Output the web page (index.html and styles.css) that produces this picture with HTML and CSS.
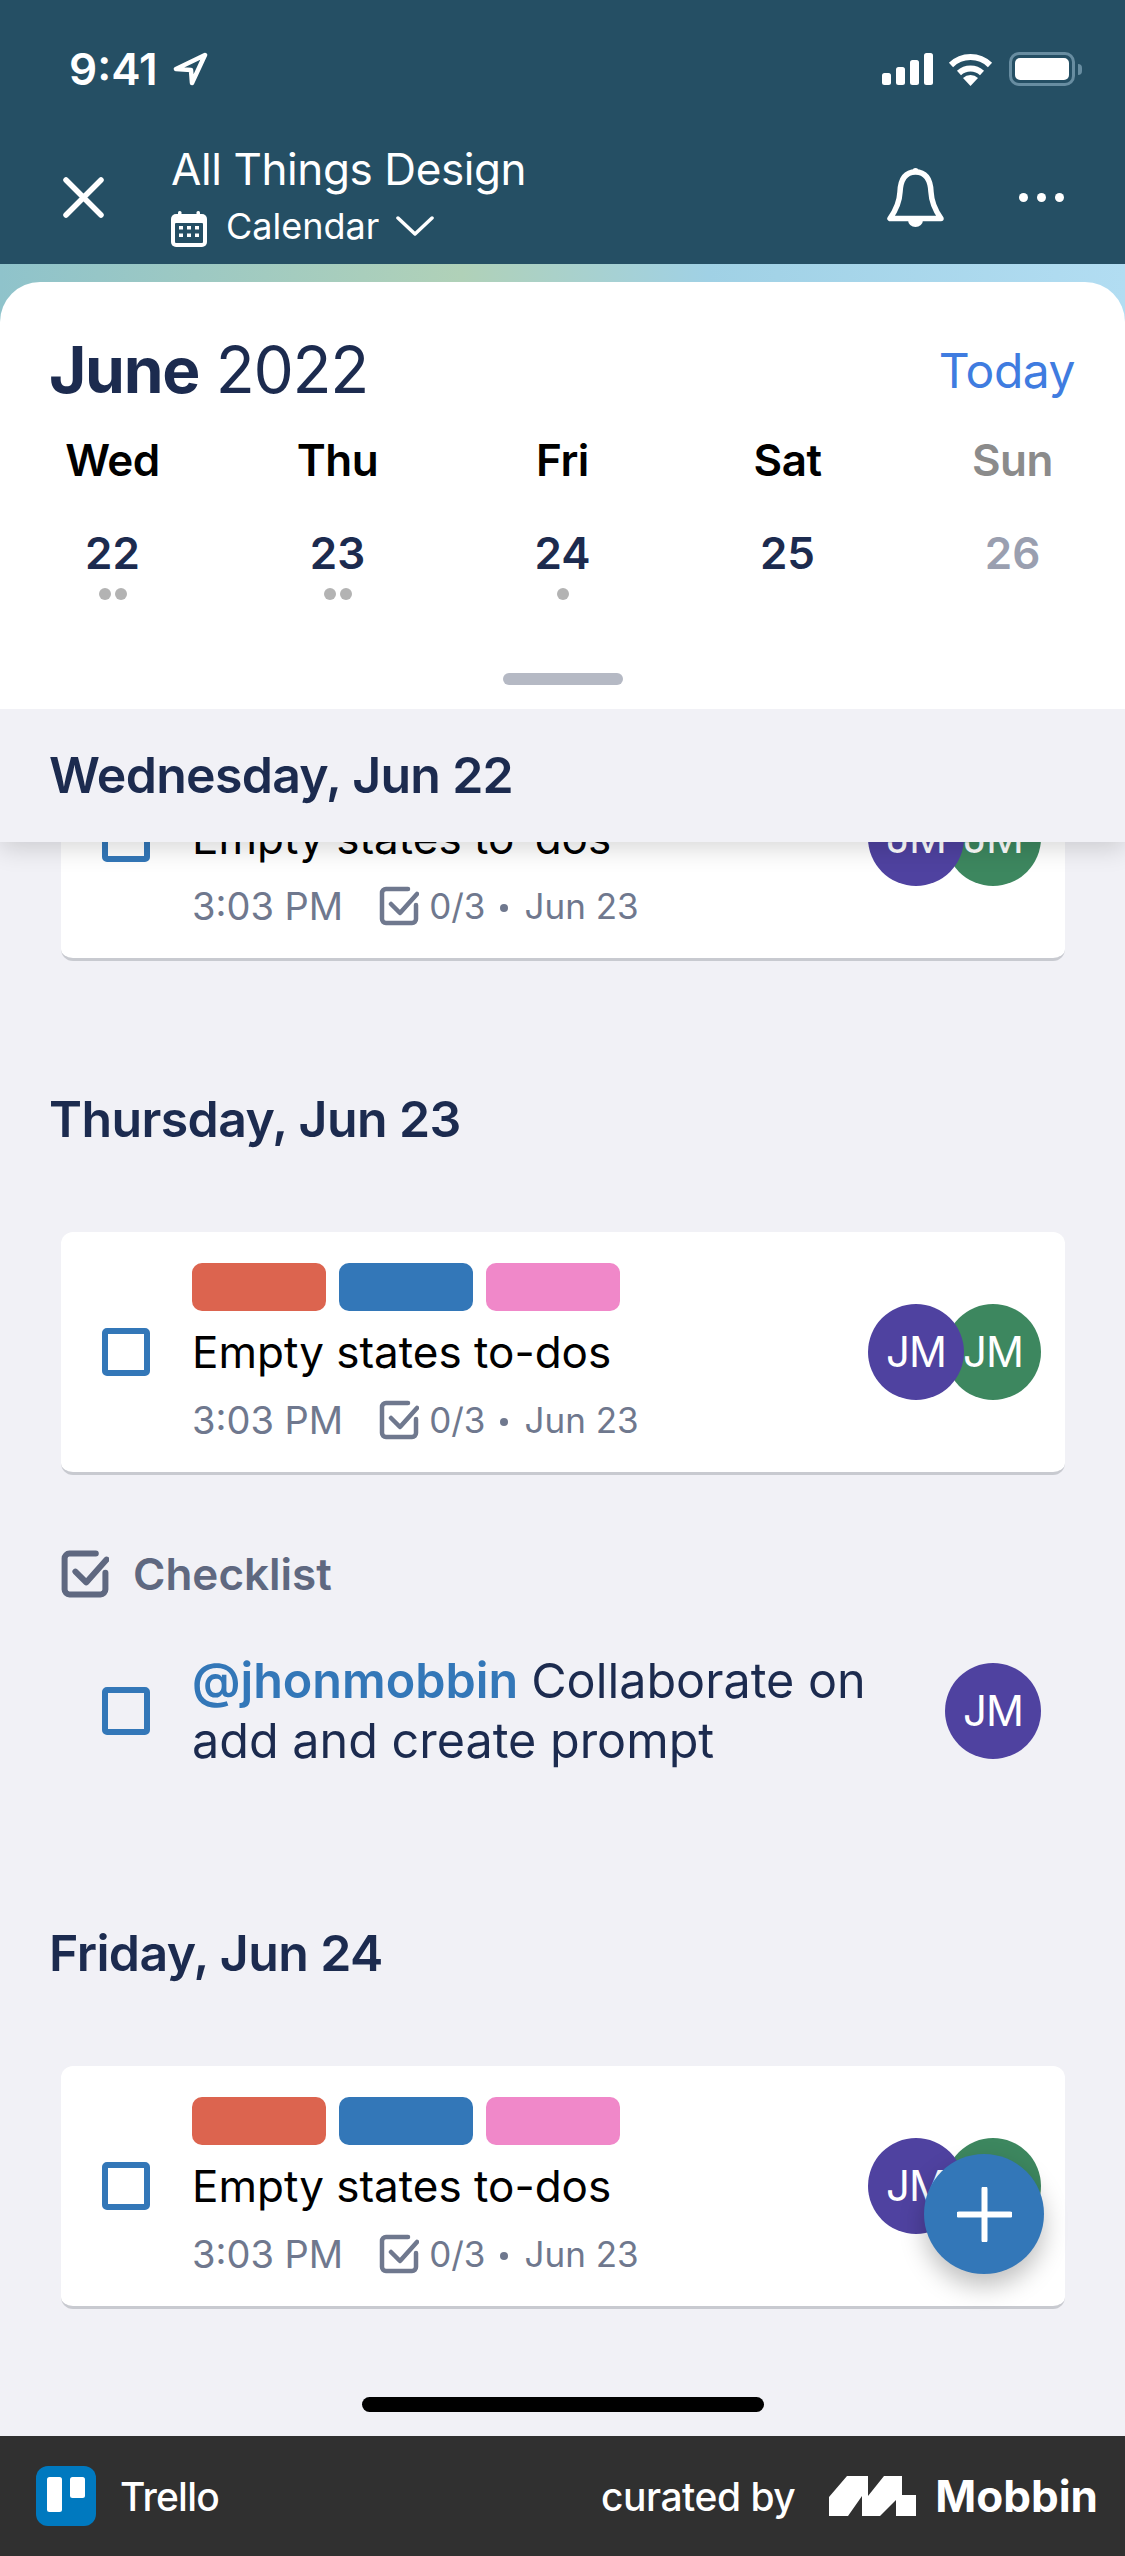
FILE: index.html
```html
<!DOCTYPE html>
<html lang="en">
<head>
  <meta charset="UTF-8" />
  <meta name="viewport" content="width=device-width, initial-scale=1.0"/>
  <title>All Things Design - Calendar</title>
  <link rel="stylesheet" href="styles.css">
</head>
<body>

  <!-- Header -->
  <header class="app-header">
    <div class="status-bar">
      <span class="clock">9:41</span>
      <svg class="location-icon" viewBox="0 0 36 34"><path d="M32 3 3 17l15 1 1 13z"/></svg>
      <div class="status-icons">
        <div class="signal"><i class="bar-1"></i><i class="bar-2"></i><i class="bar-3"></i><i class="bar-4"></i></div>
        <svg class="wifi-icon" viewBox="0 0 45 33">
          <path class="wifi-arc" d="M3 12A28 28 0 0 1 42 12"/>
          <path class="wifi-arc" d="M11 20A17 17 0 0 1 34 20"/>
          <path class="wifi-dot" d="M22.5 33 15 25A11 11 0 0 1 30 25z"/>
        </svg>
        <div class="battery"><div class="battery-level"></div></div>
        <div class="battery-cap"></div>
      </div>
    </div>
    <div class="nav-row">
      <svg class="close-icon" viewBox="0 0 41 41"><path d="M3 3 38 38M38 3 3 38"/></svg>
      <div class="board-info">
        <div class="board-name">All Things Design</div>
        <div class="board-view">
          <svg class="calendar-icon" viewBox="0 0 36 36">
            <rect class="cal-tab" x="7" y="0" width="3.5" height="8" rx="1.5"/>
            <rect class="cal-tab" x="25.5" y="0" width="3.5" height="8" rx="1.5"/>
            <rect class="cal-tab" x="0" y="3" width="36" height="33" rx="5"/>
            <rect class="cal-inner" x="4" y="12" width="28" height="20" rx="1"/>
            <rect class="cal-tab" x="8" y="15" width="4" height="3.5"/>
            <rect class="cal-tab" x="16" y="15" width="4" height="3.5"/>
            <rect class="cal-tab" x="24" y="15" width="4" height="3.5"/>
            <rect class="cal-tab" x="8" y="22.5" width="4" height="3.5"/>
            <rect class="cal-tab" x="16" y="22.5" width="4" height="3.5"/>
            <rect class="cal-tab" x="24" y="22.5" width="4" height="3.5"/>
          </svg>
          <span>Calendar</span>
          <svg class="chevron-icon" viewBox="0 0 38 22"><path d="M2 3 19 19 36 3"/></svg>
        </div>
      </div>
      <svg class="bell-icon" viewBox="0 0 57 59">
        <circle class="bell-fill" cx="28.5" cy="3" r="3"/>
        <path class="bell-line" d="M28.5 4C17 4 13.500 13 13 24 12.500 35 9 42 3 50.500H54C48 42 44.500 35 44 24 43.500 13 40 4 28.500 4z"/>
        <path class="bell-fill" d="M21 52h15a7.500 7 0 0 1-15 0z"/>
      </svg>
      <div class="more-dots"><i></i><i></i><i></i></div>
    </div>
  </header>

  <!-- Calendar panel -->
  <section class="hero-strip">
    <div class="calendar-panel">
      <div class="month-row">
        <div class="month-title"><strong>June</strong> 2022</div>
        <a href="#" class="today-link">Today</a>
      </div>
      <div class="week-grid">
        <div class="day-col">
          <div class="day-name">Wed</div>
          <div class="day-num">22</div>
          <div class="day-dots"><i></i><i></i></div>
        </div>
        <div class="day-col">
          <div class="day-name">Thu</div>
          <div class="day-num">23</div>
          <div class="day-dots"><i></i><i></i></div>
        </div>
        <div class="day-col">
          <div class="day-name">Fri</div>
          <div class="day-num">24</div>
          <div class="day-dots"><i></i></div>
        </div>
        <div class="day-col">
          <div class="day-name">Sat</div>
          <div class="day-num">25</div>
          <div class="day-dots"></div>
        </div>
        <div class="day-col day-muted">
          <div class="day-name">Sun</div>
          <div class="day-num">26</div>
          <div class="day-dots"></div>
        </div>
      </div>
      <div class="drag-handle"></div>
    </div>
  </section>

  <!-- Agenda -->
  <main class="agenda">
    <h2 class="sticky-day">Wednesday, Jun 22</h2>

    <div class="agenda-scroll">
      <article class="task-card first-card">
        <div class="task-check"></div>
        <div class="task-body">
          <div class="task-labels"><span class="label-red"></span><span class="label-blue"></span><span class="label-pink"></span></div>
          <div class="task-title">Empty states to-dos</div>
          <div class="task-meta">
            <span class="meta-time">3:03 PM</span>
            <svg class="check-icon" viewBox="0 0 40 40"><path class="check-box" d="M29 3H7A4 4 0 0 0 3 7V33A4 4 0 0 0 7 37H33A4 4 0 0 0 37 33V19"/><path class="check-mark" d="M12 18 21 27 38 8"/></svg>
            <span class="meta-small">0/3</span><span class="meta-dot"></span><span class="meta-small">Jun 23</span>
          </div>
        </div>
        <div class="avatars"><div class="avatar avatar-purple">JM</div><div class="avatar avatar-green">JM</div></div>
      </article>

      <h2 class="day-title">Thursday, Jun 23</h2>
      <article class="task-card">
        <div class="task-check"></div>
        <div class="task-body">
          <div class="task-labels"><span class="label-red"></span><span class="label-blue"></span><span class="label-pink"></span></div>
          <div class="task-title">Empty states to-dos</div>
          <div class="task-meta">
            <span class="meta-time">3:03 PM</span>
            <svg class="check-icon" viewBox="0 0 40 40"><path class="check-box" d="M29 3H7A4 4 0 0 0 3 7V33A4 4 0 0 0 7 37H33A4 4 0 0 0 37 33V19"/><path class="check-mark" d="M12 18 21 27 38 8"/></svg>
            <span class="meta-small">0/3</span><span class="meta-dot"></span><span class="meta-small">Jun 23</span>
          </div>
        </div>
        <div class="avatars"><div class="avatar avatar-purple">JM</div><div class="avatar avatar-green">JM</div></div>
      </article>

      <div class="checklist-head">
        <svg class="checklist-icon" viewBox="0 0 40 40"><path class="check-box" d="M29 3H7A4 4 0 0 0 3 7V33A4 4 0 0 0 7 37H33A4 4 0 0 0 37 33V19"/><path class="check-mark" d="M12 18 21 27 38 8"/></svg>
        <span>Checklist</span>
      </div>
      <div class="checklist-item">
        <div class="task-check"></div>
        <div class="item-text">
          <div class="item-line"><span class="mention">@jhonmobbin</span><span>Collaborate on</span></div>
          <div class="item-line">add and create prompt</div>
        </div>
        <div class="avatar avatar-purple">JM</div>
      </div>

      <h2 class="day-title friday-title">Friday, Jun 24</h2>
      <article class="task-card">
        <div class="task-check"></div>
        <div class="task-body">
          <div class="task-labels"><span class="label-red"></span><span class="label-blue"></span><span class="label-pink"></span></div>
          <div class="task-title">Empty states to-dos</div>
          <div class="task-meta">
            <span class="meta-time">3:03 PM</span>
            <svg class="check-icon" viewBox="0 0 40 40"><path class="check-box" d="M29 3H7A4 4 0 0 0 3 7V33A4 4 0 0 0 7 37H33A4 4 0 0 0 37 33V19"/><path class="check-mark" d="M12 18 21 27 38 8"/></svg>
            <span class="meta-small">0/3</span><span class="meta-dot"></span><span class="meta-small">Jun 23</span>
          </div>
        </div>
        <div class="avatars"><div class="avatar avatar-purple">JM</div><div class="avatar avatar-green">JM</div></div>
      </article>
    </div>

    <div class="home-bar"></div>

    <button class="fab"><svg viewBox="0 0 55 55"><path d="M27.500 2V53M2 27.500H53"/></svg></button>
  </main>

  <!-- Footer -->
  <footer class="credit-bar">
    <svg class="trello-logo" viewBox="0 0 60 60">
      <rect class="trello-bg" width="60" height="60" rx="12"/>
      <rect class="trello-card" x="11" y="11" width="15" height="35" rx="2.500"/>
      <rect class="trello-card" x="34" y="11" width="15" height="21" rx="2.500"/>
    </svg>
    <span class="app-name">Trello</span>
    <span class="curated">curated by</span>
    <svg class="mobbin-logo" viewBox="0 0 87 40"><path d="M0 40V21L18 0H39V20L55 0H73V19H87V40H67V24L51 40H33V20L19 40z"/></svg>
    <span class="mobbin-name">Mobbin</span>
  </footer>

</body>
</html>
```

FILE: styles.css
```css
/* Global Styles */
* {
  margin: 0;
  padding: 0;
  box-sizing: border-box;
}

body {
  width: 1125px;
  height: 2556px;
  font-family: 'Inter', 'Liberation Sans', sans-serif;
  background: #f1f1f6;
  display: flex;
  flex-direction: column;
  overflow: hidden;
}

svg {
  display: block;
  flex-shrink: 0;
}

/* Header */
.app-header {
  height: 264px;
  background: #254f64;
  color: #fff;
  flex-shrink: 0;
}

.status-bar {
  display: flex;
  align-items: center;
  height: 44px;
  margin-top: 47px;
  padding: 0 43px 0 69px;
}

.clock {
  font-size: 44px;
  font-weight: 600;
  line-height: 44px;
}

.location-icon {
  width: 36px;
  height: 34px;
  margin-left: 15px;
  fill: none;
  stroke: #fff;
  stroke-width: 4.5;
  stroke-linejoin: round;
}

.status-icons {
  display: flex;
  align-items: center;
  margin-left: auto;
}

.signal {
  display: flex;
  align-items: flex-end;
  gap: 5px;
  height: 32px;
}

.signal i {
  display: block;
  width: 9px;
  background: #fff;
  border-radius: 2.5px;
}

.bar-1 { height: 12px; }
.bar-2 { height: 18px; }
.bar-3 { height: 25px; }
.bar-4 { height: 32px; }

.wifi-icon {
  width: 45px;
  height: 33px;
  margin-left: 15px;
}

.wifi-arc {
  fill: none;
  stroke: #fff;
  stroke-width: 6;
}

.wifi-dot {
  fill: #fff;
}

.battery {
  width: 66px;
  height: 34px;
  margin-left: 16px;
  padding: 3px 3px;
  border: 3.5px solid #688da1;
  border-radius: 10px;
}

.battery-level {
  height: 100%;
  background: #fff;
  border-radius: 5px;
}

.battery-cap {
  width: 4px;
  height: 11px;
  margin-left: 3px;
  background: #688da1;
  border-radius: 0 4px 4px 0;
}

.nav-row {
  display: flex;
  align-items: center;
  height: 108px;
  margin-top: 52px;
  padding: 0 61px 0 63px;
}

.close-icon {
  width: 41px;
  height: 41px;
  fill: none;
  stroke: #fff;
  stroke-width: 5.5;
  stroke-linecap: round;
}

.board-info {
  align-self: flex-start;
  margin-left: 67px;
}

.board-name {
  font-size: 44px;
  letter-spacing: -0.4px;
  line-height: 52px;
}

.board-view {
  display: flex;
  align-items: center;
  gap: 19px;
  margin-top: 9px;
  font-size: 36px;
  line-height: 44px;
}

.calendar-icon {
  width: 36px;
  height: 36px;
  margin-top: 5px;
}

.cal-tab {
  fill: #fff;
}

.cal-inner {
  fill: #254f64;
}

.chevron-icon {
  width: 38px;
  height: 22px;
  margin-left: -2px;
  fill: none;
  stroke: #fff;
  stroke-width: 3.5;
  stroke-linecap: round;
  stroke-linejoin: round;
}

.bell-icon {
  width: 57px;
  height: 59px;
  margin-left: auto;
}

.bell-line {
  fill: none;
  stroke: #fff;
  stroke-width: 5.5;
  stroke-linejoin: round;
}

.bell-fill {
  fill: #fff;
}

.more-dots {
  display: flex;
  gap: 9px;
  margin-left: 75px;
}

.more-dots i {
  display: block;
  width: 9px;
  height: 9px;
  background: #fff;
  border-radius: 50%;
}

/* Calendar panel */
.hero-strip {
  flex-shrink: 0;
  padding-top: 18px;
  background: linear-gradient(90deg, #8fc3cb 0%, #b0d1b8 41%, #a0d1e5 63%, #b2ddf2 100%);
}

.calendar-panel {
  height: 427px;
  padding-top: 50px;
  background: #fff;
  border-radius: 40px 40px 0 0;
}

.month-row {
  display: flex;
  justify-content: space-between;
  align-items: flex-start;
  padding: 0 50px 0 49px;
}

.month-title {
  font-size: 64px;
  letter-spacing: -1.3px;
  line-height: 76px;
  color: #1c2b4f;
}

.month-title strong {
  font-weight: 700;
}

.today-link {
  margin-top: 10px;
  font-size: 48px;
  letter-spacing: -0.5px;
  line-height: 58px;
  color: #3f7ce0;
  text-decoration: none;
}

.week-grid {
  display: grid;
  grid-template-columns: repeat(5, 1fr);
  margin-top: 25px;
  text-align: center;
}

.day-name {
  font-size: 44px;
  font-weight: 600;
  letter-spacing: -0.5px;
  line-height: 54px;
  color: #000;
}

.day-num {
  margin-top: 39px;
  font-size: 44px;
  font-weight: 600;
  line-height: 54px;
  color: #1c2b4f;
}

.day-dots {
  display: flex;
  justify-content: center;
  gap: 4px;
  height: 12px;
  margin-top: 8px;
}

.day-dots i {
  display: block;
  width: 12px;
  height: 12px;
  background: #b3b3b3;
  border-radius: 50%;
}

.day-muted .day-name {
  color: #8b8b8b;
}

.day-muted .day-num {
  color: #9a9fb0;
}

.drag-handle {
  width: 120px;
  height: 12px;
  margin: 73px auto 0;
  background: #b5b9c4;
  border-radius: 6px;
}

/* Agenda */
.agenda {
  position: relative;
  flex: 1;
  display: flex;
  flex-direction: column;
  overflow: hidden;
}

.sticky-day {
  position: relative;
  z-index: 2;
  height: 133px;
  padding: 36px 0 0 49px;
  background: #f1f1f6;
  box-shadow: 0 6px 24px rgba(0, 0, 0, 0.16);
  font-size: 50px;
  font-weight: 600;
  letter-spacing: -0.7px;
  line-height: 60px;
  color: #1c2b4f;
}

.agenda-scroll {
  margin-top: -124px;
}

.day-title {
  margin: 128px 0 83px;
  padding-left: 49px;
  font-size: 50px;
  font-weight: 600;
  letter-spacing: -0.6px;
  line-height: 60px;
  color: #1c2b4f;
}

.friday-title {
  margin-top: 152px;
  margin-bottom: 83px;
}

/* Task cards */
.task-card {
  display: flex;
  align-items: center;
  width: 1004px;
  height: 243px;
  margin-left: 61px;
  padding: 0 24px 0 41px;
  background: #fff;
  border-bottom: 3px solid #c8cad0;
  border-radius: 12px;
}

.task-check {
  width: 48px;
  height: 48px;
  flex-shrink: 0;
  border: 6px solid #3377b8;
  border-radius: 5px;
}

.task-body {
  flex: 1;
  margin-left: 42px;
}

.task-labels {
  display: flex;
  gap: 13px;
}

.task-labels span {
  display: block;
  width: 134px;
  height: 48px;
  border-radius: 10px;
}

.label-red { background: #dc644f; }
.label-blue { background: #3377b8; }
.label-pink { background: #f088c9; }

.task-title {
  margin-top: 13px;
  font-size: 44px;
  line-height: 56px;
  color: #000;
}

.task-meta {
  display: flex;
  align-items: center;
  margin-top: 16px;
  margin-bottom: -2px;
  font-size: 38px;
  line-height: 48px;
  color: #6f788e;
}

.meta-time {
  margin-right: 36px;
}

.meta-small {
  font-size: 35px;
}

.check-icon {
  width: 40px;
  height: 40px;
  margin-right: 10px;
}

.check-box,
.check-mark {
  fill: none;
  stroke: #6f788e;
  stroke-width: 4.5;
  stroke-linecap: round;
  stroke-linejoin: round;
}

.meta-dot {
  width: 8px;
  height: 8px;
  margin: 4px 16px 0 15px;
  background: #6f788e;
  border-radius: 50%;
}

.avatars {
  display: flex;
}

.avatar {
  width: 96px;
  height: 96px;
  flex-shrink: 0;
  border-radius: 50%;
  color: #fff;
  font-size: 42px;
  font-weight: 400;
  letter-spacing: -1px;
  line-height: 96px;
  text-align: center;
}

.avatar-purple {
  position: relative;
  z-index: 1;
  background: #4f42a0;
}

.avatar-green {
  margin-left: -19px;
  background: #3d875f;
}

/* Checklist */
.checklist-head {
  display: flex;
  align-items: center;
  gap: 24px;
  margin: 75px 0 0 61px;
  font-size: 44px;
  font-weight: 600;
  line-height: 48px;
  color: #5f6880;
}

.checklist-icon {
  width: 48px;
  height: 48px;
}

.checklist-icon .check-box,
.checklist-icon .check-mark {
  stroke: #5f6880;
  stroke-width: 5;
}

.checklist-item {
  display: flex;
  align-items: center;
  margin: 53px 0 0 102px;
  padding-right: 84px;
}

.item-text {
  flex: 1;
  margin-left: 42px;
  font-size: 48.5px;
  line-height: 60px;
  color: #1c2b4f;
}

.item-line {
  display: flex;
  gap: 13px;
}

.mention {
  color: #3377b8;
  font-weight: 600;
}

/* Bottom */
.home-bar {
  width: 402px;
  height: 15px;
  margin: auto auto 24px;
  background: #000;
  border-radius: 8px;
}

.fab {
  position: absolute;
  right: 81px;
  bottom: 162px;
  z-index: 3;
  display: flex;
  align-items: center;
  justify-content: center;
  width: 120px;
  height: 120px;
  background: #3377b8;
  border: none;
  border-radius: 50%;
  box-shadow: 0 12px 24px rgba(0, 0, 0, 0.25);
}

.fab svg {
  width: 55px;
  height: 55px;
  fill: none;
  stroke: #fff;
  stroke-width: 6;
  stroke-linecap: round;
}

.credit-bar {
  display: flex;
  align-items: center;
  flex-shrink: 0;
  height: 120px;
  padding: 0 27px 0 36px;
  background: #303030;
  color: #fff;
}

.trello-logo {
  width: 60px;
  height: 60px;
}

.trello-bg { fill: #0079bf; }
.trello-card { fill: #fff; }

.app-name {
  margin-left: 24px;
  font-size: 39px;
  font-weight: 500;
  letter-spacing: -0.8px;
}

.curated {
  margin-left: auto;
  font-size: 39px;
  font-weight: 500;
  letter-spacing: -0.5px;
}

.mobbin-logo {
  width: 87px;
  height: 40px;
  margin-left: 34px;
  fill: #fff;
}

.mobbin-name {
  margin-left: 19px;
  font-size: 44px;
  font-weight: 700;
}
```
